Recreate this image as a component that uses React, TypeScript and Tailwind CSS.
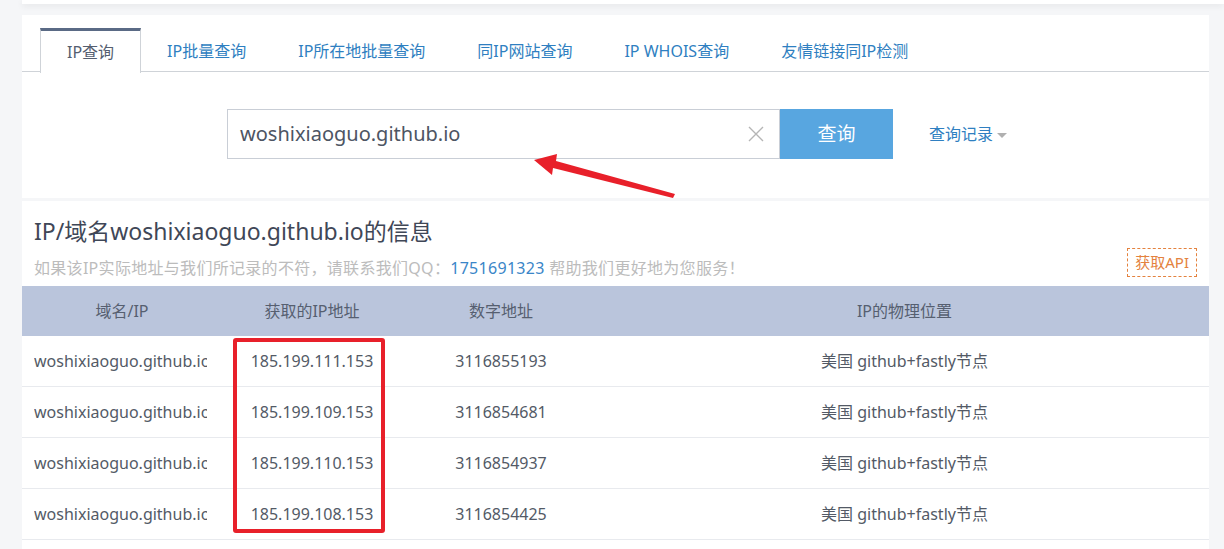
import React from 'react'

const tabs = ['IP查询', 'IP批量查询', 'IP所在地批量查询', '同IP网站查询', 'IP WHOIS查询', '友情链接同IP检测']

const rows = [
  { ip: '185.199.111.153', num: '3116855193' },
  { ip: '185.199.109.153', num: '3116854681' },
  { ip: '185.199.110.153', num: '3116854937' },
  { ip: '185.199.108.153', num: '3116854425' },
]

const font = { fontFamily: '"Noto Sans", "Noto Sans CJK SC", sans-serif' }

export default function App() {
  return (
    <div className="h-[549px] bg-[#f5f6f8] text-[#555b66] overflow-hidden relative" style={font}>
      {/* top bar */}
      <div className="ml-[22px] h-[4px] bg-white shadow-[0_2px_6px_rgba(0,0,0,0.08)]" />

      {/* search card */}
      <div className="ml-[22px] mt-[11px] w-[1187px] bg-white pt-[13px] h-[183px]">
        <div className="flex border-b border-[#cfd3d8] pl-[18px] h-[44px]">
          {tabs.map((t, i) =>
            i === 0 ? (
              <div
                key={t}
                className="h-[45px] -mb-px px-[26px] flex items-center text-[16px] text-[#555e6f] bg-white border-t-[3px] border-t-[#5a6a85] border-x border-x-[#cfd3d8]"
              >
                {t}
              </div>
            ) : (
              <div key={t} className="h-full px-[26px] flex items-center text-[16px] text-[#2f7fc1] pt-[3px]">
                {t}
              </div>
            )
          )}
        </div>

        <div className="flex items-center mt-[37px] pl-[205px]">
          <div className="w-[553px] h-[50px] border border-[#c9ced6] flex items-center pl-[12px] pr-[14px]">
            <span className="flex-1 text-[20px] text-[#4d5563]">woshixiaoguo.github.io</span>
            <svg width="18" height="18" viewBox="0 0 18 18" className="text-[#b5b5b5]">
              <path d="M2 2 L16 16 M16 2 L2 16" stroke="currentColor" strokeWidth="1.4" />
            </svg>
          </div>
          <button className="w-[113px] h-[50px] bg-[#58a6e0] text-white text-[19px]">查询</button>
          <div className="ml-[36px] flex items-center gap-[4px] text-[16px] text-[#2f7fc1]">
            查询记录
            <span className="w-0 h-0 border-x-[5px] border-x-transparent border-t-[5px] border-t-[#b0b0b0] mt-[2px]" />
          </div>
        </div>
      </div>

      {/* info card */}
      <div className="ml-[22px] mt-[3px] w-[1187px] bg-white pt-[13px] h-[400px] relative">
        <div className="px-[12px]">
          <h1 className="text-[23px] leading-[34px] text-[#3f4757]">IP/域名woshixiaoguo.github.io的信息</h1>
          <div className="flex items-end justify-between pb-[6px]">
            <p className="text-[16px] leading-[24px] tracking-[0.3px] text-[#bcbcbc]">
              如果该IP实际地址与我们所记录的不符，请联系我们QQ：<span className="text-[#3a86c8]">1751691323</span> 帮助我们更好地为您服务！
            </p>
            <div className="h-[29px] px-[7px] mb-[3px] flex items-center border border-dashed border-[#e4823e] text-[15px] text-[#e4823e]">
              获取API
            </div>
          </div>
        </div>

        <div className="relative">
          <div className="flex h-[50px] bg-[#bac5dc] text-[16px] text-[#565f70] items-center">
            <div className="w-[200px] text-center">域名/IP</div>
            <div className="w-[180px] text-center">获取的IP地址</div>
            <div className="w-[198px] text-center">数字地址</div>
            <div className="flex-1 text-center">IP的物理位置</div>
          </div>
          {rows.map((r) => (
            <div key={r.ip} className="flex h-[51px] items-center border-b border-[#e8eaee] text-[16px] text-[#535a66]">
              <div className="w-[200px] pl-[12px]">
                <div className="w-[173px] overflow-hidden whitespace-nowrap">woshixiaoguo.github.io</div>
              </div>
              <div className="w-[180px] text-center">{r.ip}</div>
              <div className="w-[198px] text-center">{r.num}</div>
              <div className="flex-1 text-center">美国 github+fastly节点</div>
            </div>
          ))}

          {/* red highlight box */}
          <div className="absolute left-[211px] top-[52px] w-[152px] h-[195px] border-[4px] border-[#e8202a] rounded-[3px]" />
        </div>
      </div>

      {/* red arrow annotation */}
      <svg className="absolute left-0 top-0 pointer-events-none" width="1224" height="549">
        <polygon points="534,160 557,154 556,161 675,194 673,198 553,168 552,175" fill="#e8202a" />
      </svg>
    </div>
  )
}
